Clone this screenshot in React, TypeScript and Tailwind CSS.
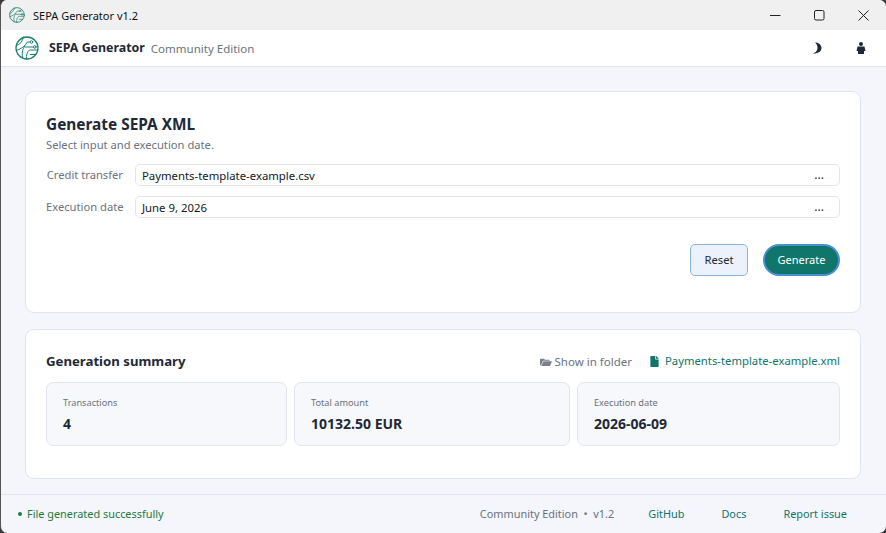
import { FaFile } from "react-icons/fa";

const Logo = ({ size }: { size: number }) => (
  <svg width={size} height={size} viewBox="0 0 24 24" fill="none" stroke="#1f7f70" strokeWidth="1" strokeLinecap="round">
    <circle cx="12" cy="12" r="11" strokeWidth="1.3" />
    <path d="M1.500 9.500c3.500-1 6-4 7-8.500" />
    <path d="M1.300 14.500c5-1.500 9-4.500 11-8.500h2.500" />
    <path d="M8 22.300c-1.500-4-1-8.800 2-12.300" />
    <path d="M11.500 23c-.5-3.500.5-7 3-9h7.500" />
    <path d="M10.500 11h8" />
    <path d="M15.500 18.500h4.500" />
    <circle cx="16.500" cy="6" r="1.300" />
    <circle cx="19.800" cy="11" r="1.300" />
  </svg>
);

const Field = ({ label, value }: { label: string; value: string }) => (
  <div className="flex items-center h-[22px]">
    <div className="w-[89px] pr-[12px] pt-[1px] text-right text-[11.2px] text-[#6b7280] whitespace-nowrap">{label}</div>
    <div className="flex-1 h-[22px] flex items-center justify-between pl-[6px] pr-[15px] bg-white border border-[#e1e5ee] rounded-[5px] text-[11.35px] text-[#111827]">
      <span className="pt-[1px]">{value}</span>
      <span className="text-[12px] text-[#1f2937]">...</span>
    </div>
  </div>
);

const Stat = ({ label, value }: { label: string; value: string }) => (
  <div className="h-[64px] bg-[#f7f8fb] border border-[#e1e5ee] rounded-[7px] px-4 pt-[13px]">
    <div className="text-[9.2px] leading-[14px] text-[#6b7280]">{label}</div>
    <div className="mt-[4px] text-[14px] leading-[20px] font-bold text-[#1f2937]">{value}</div>
  </div>
);

export default function App() {
  return (
    <div className="w-[886px] h-[533px] bg-[#3a3a3a] overflow-hidden font-['Noto_Sans',sans-serif]">
      <div className="w-full h-full flex flex-col rounded-[7px] overflow-hidden bg-[#f4f6fb] border-l border-[#555]">
        {/* title bar */}
        <div className="h-[30px] shrink-0 flex items-center bg-[#f0f0f0] pl-[8px]">
          <Logo size={16} />
          <span className="ml-[8px] mt-[2px] text-[11px] text-[#111]">SEPA Generator v1.2</span>
          <div className="ml-auto flex items-center pr-[17px] gap-[33px]">
            <svg width="11" height="11" viewBox="0 0 11 11" stroke="#222" fill="none"><path d="M0 5.500h10.500" /></svg>
            <svg width="11" height="11" viewBox="0 0 11 11" stroke="#222" fill="none"><rect x="0.500" y="0.500" width="9.500" height="9.500" rx="1.500" /></svg>
            <svg width="11" height="11" viewBox="0 0 11 11" stroke="#222" fill="none"><path d="M0.500 0.500l10 10M10.500 0.500l-10 10" /></svg>
          </div>
        </div>
        {/* app header */}
        <div className="h-[37px] shrink-0 flex items-center bg-white border-b border-[#dfe4ee] pl-[14px]">
          <Logo size={24} />
          <span className="ml-[10px] mt-[1px] text-[12.4px] font-bold text-[#1f2937]">SEPA Generator</span>
          <span className="ml-[6px] mt-[2px] text-[11.5px] text-[#6b7280]">Community Edition</span>
          <div className="ml-auto flex items-center gap-[33px] pr-[20px]">
            <svg width="11" height="12" viewBox="0 0 11 12" fill="#1f2937"><path d="M3 0.500C7 0.500 9.500 3 9.500 6S7 11.500 1 11.500C4 10.500 5.500 8.500 5.500 6S4.500 1.500 3 0.500z" /></svg>
            <svg width="10" height="12" viewBox="0 0 10 12" fill="#1f2937"><circle cx="5" cy="2" r="2" /><path d="M1.500 4.500h7l1 4.500h-1.500v3h-6V9H.5z" /></svg>
          </div>
        </div>
        {/* main */}
        <div className="flex-1 pl-[24px] pr-[25px] pt-[24px] flex flex-col gap-[16px]">
          <section className="h-[222px] shrink-0 bg-white border border-[#e1e5ee] rounded-[9px] px-5 pt-[23px]">
            <h1 className="text-[15.400px] leading-[20px] font-bold text-[#1f2937]">Generate SEPA XML</h1>
            <p className="text-[11.200px] leading-[16px] mt-[2px] text-[#6b7280]">Select input and execution date.</p>
            <div className="mt-[11px] flex flex-col gap-[10px]">
              <Field label="Credit transfer" value="Payments-template-example.csv" />
              <Field label="Execution date" value="June 9, 2026" />
            </div>
            <div className="mt-[26px] flex justify-end items-center gap-[15px]">
              <button className="w-[58px] h-[32px] pt-[1px] text-[11.200px] text-[#1f2937] bg-[#ebf2fb] border border-[#8db4dc] rounded-[5px]">Reset</button>
              <button className="w-[77px] h-[32px] pt-[1px] text-[11px] text-white bg-[#10756a] border-2 border-[#4a90d0] rounded-full">Generate</button>
            </div>
          </section>
          <section className="h-[150px] shrink-0 bg-white border border-[#e1e5ee] rounded-[9px] px-5 pt-[21px]">
            <div className="flex items-center justify-between h-[21px]">
              <h2 className="text-[13.200px] font-bold text-[#1f2937]">Generation summary</h2>
              <div className="flex items-center gap-[17px]">
                <span className="flex items-center gap-[3px] text-[11.500px] text-[#6b7280]">
                  <svg width="12" height="8" viewBox="0 0 12 8" fill="#7a808c"><path d="M0 7V1.500C0 1 .4.700 1 .700h3l1 1h4.500v1H3L.8 7.500z" /><path d="M3.400 3.200H12L10 8H1.200z" /></svg>
                  Show in folder
                </span>
                <span className="flex items-center gap-[5px] text-[11.300px] text-[#10756a]"><FaFile className="text-[11px]" />Payments-template-example.xml</span>
              </div>
            </div>
            <div className="mt-[10px] grid grid-cols-[241px_276px_1fr] gap-[7px]">
              <Stat label="Transactions" value="4" />
              <Stat label="Total amount" value="10132.50 EUR" />
              <Stat label="Execution date" value="2026-06-09" />
            </div>
          </section>
        </div>
        {/* status bar */}
        <div className="h-[39px] shrink-0 flex items-center border-t border-[#e1e5ee] pl-[17px] pr-[39px] text-[10.900px]">
          <span className="w-[4px] h-[4px] rounded-full bg-[#1f7a3f]" />
          <span className="ml-[5px] text-[#1f7a3f]">File generated successfully</span>
          <span className="ml-auto text-[#6b7280]">Community Edition &nbsp;•&nbsp; v1.2</span>
          <span className="ml-[34px] text-[#10756a]">GitHub</span>
          <span className="ml-[37px] text-[#10756a]">Docs</span>
          <span className="ml-[37px] text-[#10756a]">Report issue</span>
        </div>
      </div>
    </div>
  );
}
